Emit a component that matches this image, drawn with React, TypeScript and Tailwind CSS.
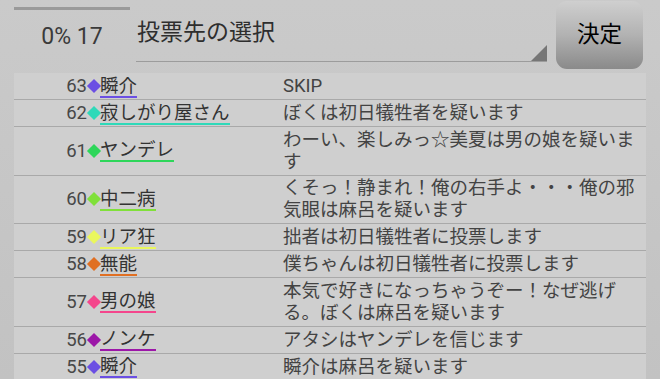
const votes = [
  { no: 63, name: "瞬介", color: "#6b4fe3", msg: "SKIP" },
  { no: 62, name: "寂しがり屋さん", color: "#2fd9b9", msg: "ぼくは初日犠牲者を疑います" },
  { no: 61, name: "ヤンデレ", color: "#2ed65a", msg: "わーい、楽しみっ☆美夏は男の娘を疑います" },
  { no: 60, name: "中二病", color: "#80e03a", msg: "くそっ！静まれ！俺の右手よ・・・俺の邪気眼は麻呂を疑います" },
  { no: 59, name: "リア狂", color: "#eaf75c", msg: "拙者は初日犠牲者に投票します" },
  { no: 58, name: "無能", color: "#e06f22", msg: "僕ちゃんは初日犠牲者に投票します" },
  { no: 57, name: "男の娘", color: "#f4468c", msg: "本気で好きになっちゃうぞー！なぜ逃げる。ぼくは麻呂を疑います" },
  { no: 56, name: "ノンケ", color: "#9c17a8", msg: "アタシはヤンデレを信じます" },
  { no: 55, name: "瞬介", color: "#6b4fe3", msg: "瞬介は麻呂を疑います" },
];

export default function App() {
  return (
    <div className="w-[660px] h-[379px] overflow-hidden bg-gradient-to-b from-[#cacaca] to-[#c2c2c2] font-['Roboto','Noto_Sans_CJK_JP',sans-serif]">
      {/* ヘッダー */}
      <div className="flex h-[73px] pl-[14px]">
        <div className="w-[116px] flex flex-col">
          <div className="h-[3px] mt-[7px] bg-[#9a9a9a]" />
          <div className="flex-1 flex items-center justify-center pb-[8px] text-[23px] text-[#3a3a3a]">0% 17</div>
        </div>
        <div className="relative ml-[6px] w-[411px] h-[62px] border-b border-[#9c9c9c]">
          <div className="pl-px pt-[17px] text-[23px] leading-[32px] text-[#2e2e2e]">投票先の選択</div>
          <div className="absolute right-0 bottom-0 w-[16px] h-[16px] bg-[#767676] [clip-path:polygon(100%_0,100%_100%,0_100%)]" />
        </div>
        <button className="ml-[9px] mt-px w-[87px] h-[68px] rounded-[11px] bg-gradient-to-b from-[#cfcfcf] via-[#b2b2b2] to-[#8a8a8a] text-[22.5px] text-black">
          決定
        </button>
      </div>

      {/* 投票リスト */}
      <div className="ml-[14px] w-[632px] bg-[#cfcfcf]">
        {votes.map((v, i) => (
          <div
            key={i}
            className="grid grid-cols-[73px_13px_183px_360px] items-center py-[1.5px] border-b border-[#a9a9a9] text-[18.5px] leading-[22.3px]"
          >
            <div className="text-right text-[#474747]">{v.no}</div>
            <div className="flex justify-center">
              <div className="w-[10px] h-[10px] rotate-45" style={{ backgroundColor: v.color }} />
            </div>
            <div>
              <span
                className="inline-block leading-[20px] border-b-2 text-[#333]"
                style={{ borderColor: v.color }}
              >
                {v.name}
              </span>
            </div>
            <div className="text-[#434343]">{v.msg}</div>
          </div>
        ))}
      </div>
    </div>
  );
}
